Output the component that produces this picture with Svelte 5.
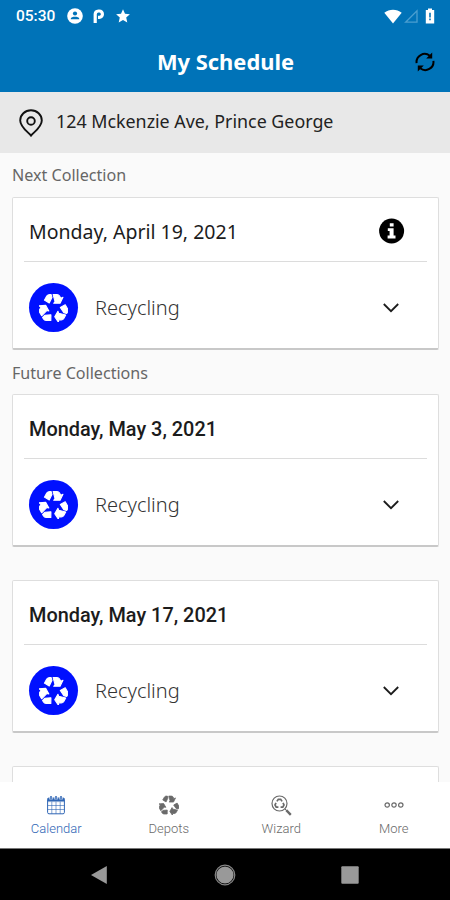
<script>

  const nextCollection = { date: "Monday, April 19, 2021", type: "Recycling" };

  const futureCollections = [
    { date: "Monday, May 3, 2021", type: "Recycling" },
    { date: "Monday, May 17, 2021", type: "Recycling" },
  ];

  const tabs = [
    { id: "calendar", label: "Calendar" },
    { id: "depots", label: "Depots" },
    { id: "wizard", label: "Wizard" },
    { id: "more", label: "More" },
  ];

  let activeTab = "calendar";

</script>


{#snippet recycleIcon(size)}
  <svg width={size} height={size} viewBox="0 0 30 30" fill="currentColor" stroke="currentColor" stroke-width="1.1" stroke-linejoin="round">
    <!-- one bent arrow, turned three times -->
    {#each [0, 120, 240] as angle}
      <g transform="rotate({angle} 15 16)">
        <path d="M5.6 7.4L8 3.2Q9.1 1.6 11.1 1.6H12.6L13.4 4.6L10.6 10.4Z" />
        <path d="M14.6 1.6H18.6Q20.4 1.6 21.3 3.2L22.5 5.5L24.8 4.4L21.8 10.6L15.2 10.6L16.6 8.9Z" />
      </g>
    {/each}
  </svg>
{/snippet}

{#snippet card(item, next)}
  <article class="card">
    <div class="card-date" class:next>
      <span>{item.date}</span>
      {#if next}
        <svg class="info" width="26" height="26" viewBox="0 0 26 26">
          <circle cx="12.6" cy="13" r="12.5" fill="#000" />
          <path d="M10.8 5.2h3.8v3.4h-3.8zM8.8 10.2h5.8v7.4h1.9v2.8H8.6v-2.8h2v-4.7H8.8z" fill="#fff" />
        </svg>
      {/if}
    </div>
    <div class="card-row">
      <span class="badge">{@render recycleIcon(29)}</span>
      <span class="type">{item.type}</span>
      <svg class="chevron" width="18" height="12" viewBox="0 0 18 12" fill="none" stroke="#1c1c1c" stroke-width="1.8">
        <path d="M1.8 2L9 9.2L16.2 2" />
      </svg>
    </div>
  </article>
{/snippet}


<div class="screen">

  <header>
    <div class="status">
      <span class="time">05:30</span>
      <svg class="account" width="16" height="16" viewBox="0 0 16 16">
        <circle cx="8" cy="8" r="7.8" fill="#fff" />
        <circle cx="8" cy="5.5" r="2.1" fill="#0073b8" />
        <path d="M3.8 11.3V10.6C3.8 9.3 6 8.8 8 8.8s4.2.5 4.2 1.8v.7z" fill="#0073b8" />
      </svg>
      <svg class="parking" width="12" height="14" viewBox="0 0 12 14" fill="none" stroke="#fff" stroke-width="3.2">
        <path d="M2.2 14V5.2A3.4 3.4 0 0 1 5.4 2H6.4a3 3.2 0 0 1 0 6.4H5" />
      </svg>
      <svg width="14" height="14" viewBox="0 0 14 14" fill="#fff">
        <path d="M7 .2L9 4.8L13.9 5.3L10.2 8.6L11.3 13.5L7 10.9L2.7 13.5L3.8 8.6L.1 5.3L5 4.8Z" />
      </svg>
      <div class="signals">
        <svg width="18" height="15" viewBox="0 0 18 15" fill="#fff">
          <path d="M.3 3.7C5.3-.2 12.7-.2 17.7 3.7L9 14.6Z" />
        </svg>
        <svg class="cell" width="14" height="14" viewBox="0 0 14 14" fill="none" stroke="#4b9fd0" stroke-width="1.3">
          <path d="M1.6 13.2L13 1.8V13.2Z" />
        </svg>
        <svg width="10" height="16" viewBox="0 0 10 16">
          <path d="M.8 2H3V.4H7V2H9.2V15.6H.8Z" fill="#fff" />
          <path d="M4.2 4.8h1.6v4.6H4.2zM4.2 10.6h1.6v1.6H4.2z" fill="#0073b8" />
        </svg>
      </div>
    </div>

    <div class="titlebar">
      <h1>My Schedule</h1>
      <svg class="refresh" width="20" height="20" viewBox="0 0 20 20" fill="none" stroke="#000" stroke-width="2">
        <path d="M1.6 11.2A8.2 8.2 0 0 1 14.8 3.7" />
        <path d="M18.4 8.8A8.2 8.2 0 0 1 5.2 16.3" />
        <path d="M17.2.4V6.6H11.2ZM2.8 19.6V13.4H8.8Z" fill="#000" stroke="none" />
      </svg>
    </div>
  </header>

  <div class="address">
    <svg width="24" height="28" viewBox="0 0 24 28" fill="none" stroke="#111" stroke-width="1.9">
      <path d="M12 26.6C9.5 23.4 1.2 18 1.2 11.4A10.8 10.2 0 0 1 22.8 11.4C22.8 18 14.5 23.4 12 26.6Z" />
      <circle cx="12" cy="12" r="3.8" />
    </svg>
    <span>124 Mckenzie Ave, Prince George</span>
  </div>

  <main>
    <h2 class="first">Next Collection</h2>
    {@render card(nextCollection, true)}

    <h2>Future Collections</h2>
    <div class="future">
      {#each futureCollections as item}
        {@render card(item, false)}
      {/each}
      <article class="card"></article>
    </div>
  </main>

  <nav class="tabs">
    {#each tabs as tab}
      <button class="tab" class:active={activeTab === tab.id} on:click={() => (activeTab = tab.id)}>
        <span class="tab-icon">
          {#if tab.id === "calendar"}
            <svg width="18" height="20" viewBox="0 0 18 20" fill="none" stroke="currentColor">
              <rect x=".6" y="3" width="16.8" height="15.8" rx="1.4" stroke-width="1" />
              <path d="M.6 3.2H17.4V6H.6Z" fill="currentColor" stroke="none" />
              <path d="M4 1.2V4.6M9 1.2V4.6M14 1.2V4.6" stroke="#fff" stroke-width="3" />
              <path d="M4 1V4.6M9 1V4.6M14 1V4.6" stroke-width="1.5" />
              <path d="M.6 6.6H17.4M.6 10.5H17.4M.6 14.5H17.4M4.8 6.6V18.8M9 6.6V18.8M13.2 6.6V18.8" stroke-width=".6" />
            </svg>
          {:else if tab.id === "depots"}
            {@render recycleIcon(20)}
          {:else if tab.id === "wizard"}
            <svg width="21" height="21" viewBox="0 0 21 21" fill="none" stroke="currentColor">
              <circle cx="8.5" cy="8.5" r="7.5" stroke-width="1.2" />
              <path d="M5.9 6.4L7.3 4.3H9.7L11.1 6.4M12 7.8L13 10L11.8 12.1H9.6M7.4 12.1H5.2L4 10L5 7.8" stroke-width="1.7" />
              <path d="M13.8 13.8L15.4 15.4" stroke-width="1" />
              <path d="M15.2 15.2L19.8 19.8" stroke-width="2.4" />
            </svg>
          {:else}
            <svg width="20" height="8" viewBox="0 0 20 8" fill="none" stroke="currentColor" stroke-width="1.2">
              <circle cx="3.2" cy="4" r="2.2" />
              <circle cx="10" cy="4" r="2.2" />
              <circle cx="16.8" cy="4" r="2.2" />
            </svg>
          {/if}
        </span>
        <span class="tab-label">{tab.label}</span>
      </button>
    {/each}
  </nav>

  <div class="system">
    <svg width="18" height="20" viewBox="0 0 18 20" fill="#999"><path d="M0 10L15.8 1V19Z" /></svg>
    <svg width="22" height="22" viewBox="0 0 22 22">
      <circle cx="11" cy="11" r="8.6" fill="#999" />
      <circle cx="11" cy="11" r="9.8" fill="none" stroke="#888" stroke-width="1.2" />
    </svg>
    <svg width="18" height="18" viewBox="0 0 18 18" fill="#999"><rect x=".3" y=".3" width="17.4" height="17.4" rx="1" /></svg>
  </div>

</div>


<style>

  :global(body) {
    margin: 0;
    background: #fafafa;
  }

  .screen {
    width: 450px;
    height: 900px;
    display: flex;
    flex-direction: column;
    overflow: hidden;
    background: #fafafa;
    font-family: "Noto Sans", "Open Sans", sans-serif;
  }

  svg {
    display: block;
    flex-shrink: 0;
  }

  /* HEADER */

  header {
    height: 92px;
    flex-shrink: 0;
    background: #0073b8;
    color: #fff;
  }

  .status {
    height: 32px;
    padding: 0 15px 0 16px;
    display: flex;
    align-items: center;
  }

  .time {
    width: 51px;
    font-family: Roboto, sans-serif;
    font-size: 15.5px;
    font-weight: 500;
    line-height: 32px;
  }

  .parking {
    margin: 0 11px 0 10px;
  }

  .signals {
    margin-left: auto;
    display: flex;
    align-items: center;
  }

  .cell {
    margin: 0 7px 0 2px;
  }

  .titlebar {
    height: 60px;
    padding: 0 15px 0 16px;
    display: grid;
    grid-template-columns: 20px 1fr 20px;
    align-items: center;
  }

  h1 {
    grid-column: 2;
    margin: 0;
    font-size: 21.9px;
    font-weight: 700;
    line-height: 60px;
    height: 60px;
    text-align: center;
  }

  .address {
    height: 61px;
    flex-shrink: 0;
    padding: 0 19px;
    display: flex;
    align-items: center;
    gap: 13px;
    background: #e8e8e8;
    color: #222;
    font-size: 17.85px;
  }

  .address span {
    margin-top: -3px;
  }

  /* COLLECTIONS */

  main {
    flex: 1;
    min-height: 0;
    overflow: hidden;
    padding: 0 11px 0 12px;
  }

  h2 {
    margin: 0;
    height: 44px;
    color: #666;
    font-size: 16.1px;
    font-weight: 400;
    line-height: 47px;
  }

  h2.first {
    line-height: 45px;
  }

  .card {
    box-sizing: border-box;
    height: 153px;
    border: 1px solid #dedede;
    border-bottom: 2px solid #c8c8c8;
    border-radius: 2px;
    background: #fff;
  }

  .future {
    display: flex;
    flex-direction: column;
    gap: 33px;
  }

  .card-date {
    height: 63px;
    margin: 0 11px;
    padding: 0 22px 0 5px;
    display: flex;
    align-items: center;
    justify-content: space-between;
    border-bottom: 1px solid #dcdcdc;
    color: #1c1c1c;
    font-family: Roboto, sans-serif;
    font-size: 19.9px;
    font-weight: 500;
  }

  .card-date span {
    padding-top: 5px;
  }

  .card-date.next {
    font-family: "Noto Sans", "Open Sans", sans-serif;
    font-size: 19.5px;
    font-weight: 400;
  }

  .card-date.next span {
    padding-top: 3px;
  }

  .info {
    margin-top: 3px;
  }

  .card-row {
    height: 91px;
    padding: 0 38px 0 16px;
    display: flex;
    align-items: center;
  }

  .badge {
    width: 49px;
    height: 49px;
    display: flex;
    align-items: center;
    justify-content: center;
    border-radius: 50%;
    background: #0010ff;
    color: #fff;
  }

  .type {
    flex: 1;
    margin: -1px 0 0 17px;
    color: #333;
    font-size: 20px;
    font-weight: 300;
  }

  /* BOTTOM BARS */

  .tabs {
    height: 66px;
    flex-shrink: 0;
    display: grid;
    grid-template-columns: repeat(4, 1fr);
    background: #fff;
  }

  .tab {
    padding: 11px 0 0;
    display: flex;
    flex-direction: column;
    align-items: center;
    border: 0;
    background: none;
    color: #6a6a6a;
    font-family: Roboto, sans-serif;
  }

  .tab.active {
    color: #2f66b5;
  }

  .tab-icon {
    height: 24px;
    display: flex;
    align-items: center;
  }

  .tab-label {
    margin-top: 4px;
    font-size: 13px;
    font-weight: 300;
    line-height: 16px;
  }

  .system {
    box-sizing: border-box;
    height: 52px;
    flex-shrink: 0;
    padding: 0 37px;
    display: grid;
    grid-template-columns: repeat(3, 1fr);
    align-items: center;
    justify-items: center;
    border-top: 1px solid #777;
    background: #000;
  }

</style>
